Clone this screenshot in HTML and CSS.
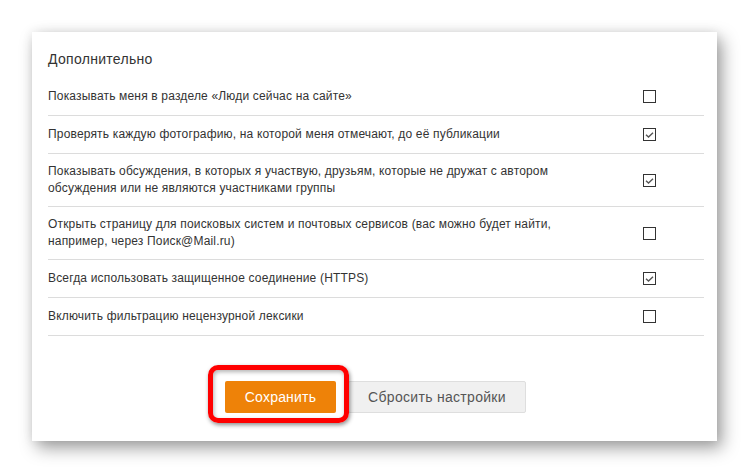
FILE: index.html
```html
<!DOCTYPE html>
<html lang="ru">
<head>
<meta charset="utf-8">
<link rel="stylesheet" href="styles.css">
</head>
<body>
<div class="card">
  <div class="title">Дополнительно</div>
  <ul class="rows">
    <li class="row"><span class="label">Показывать меня в разделе «Люди сейчас на сайте»</span><span class="cb"></span></li>
    <li class="row"><span class="label">Проверять каждую фотографию, на которой меня отмечают, до её публикации</span><span class="cb checked"><svg viewBox="0 0 13 13" width="13" height="13"><path d="M3 6.8 L5.5 9 L10 4.8" fill="none" stroke="#555" stroke-width="1.4"/></svg></span></li>
    <li class="row"><span class="label">Показывать обсуждения, в которых я участвую, друзьям, которые не дружат с автором обсуждения или не являются участниками группы</span><span class="cb checked"><svg viewBox="0 0 13 13" width="13" height="13"><path d="M3 6.8 L5.5 9 L10 4.8" fill="none" stroke="#555" stroke-width="1.4"/></svg></span></li>
    <li class="row"><span class="label">Открыть страницу для поисковых систем и почтовых сервисов (вас можно будет найти, например, через Поиск@Mail.ru)</span><span class="cb"></span></li>
    <li class="row"><span class="label">Всегда использовать защищенное соединение (HTTPS)</span><span class="cb checked"><svg viewBox="0 0 13 13" width="13" height="13"><path d="M3 6.8 L5.5 9 L10 4.8" fill="none" stroke="#555" stroke-width="1.4"/></svg></span></li>
    <li class="row"><span class="label">Включить фильтрацию нецензурной лексики</span><span class="cb"></span></li>
  </ul>
  <div class="actions">
    <div class="save-wrap">
      <button class="btn btn-save">Сохранить</button>
      <span class="highlight"></span>
    </div>
    <button class="btn btn-reset">Сбросить настройки</button>
  </div>
</div>
</body>
</html>
```

FILE: styles.css
```css
html, body {
  margin: 0;
  padding: 0;
  background: #fff;
}
body {
  font-family: "Liberation Sans", Arial, sans-serif;
  color: #333;
  padding: 32px 0 0 32px;
  height: 473px;
  box-sizing: border-box;
  overflow: hidden;
}
.card {
  width: 685px;
  height: 409px;
  box-sizing: border-box;
  background: #fff;
  padding: 19px 13px 0 16px;
  box-shadow: 5px 7px 16px rgba(0,0,0,0.38), 0 0 10px rgba(0,0,0,0.08);
}
.title {
  font-size: 14px;
  line-height: 17px;
  letter-spacing: 0.3px;
  margin-bottom: 10px;
}
.rows {
  list-style: none;
  margin: 0;
  padding: 0;
}
.row {
  display: flex;
  align-items: center;
  justify-content: space-between;
  padding: 9px 0;
  min-height: 19px;
  border-bottom: 1px solid #dcdcdc;
  font-size: 12px;
  line-height: 17px;
  letter-spacing: 0.17px;
}
.label {
  width: 540px;
}
.cb {
  width: 13px;
  height: 13px;
  box-sizing: border-box;
  border: 1px solid #333;
  margin-right: 48px;
  position: relative;
  flex: none;
}
.cb svg {
  position: absolute;
  left: -1px;
  top: -1px;
}
.actions {
  display: flex;
  justify-content: center;
  gap: 12px;
  margin-top: 45px;
  margin-left: -1px;
}
.save-wrap {
  position: relative;
}
.btn {
  font-family: "Liberation Sans", Arial, sans-serif;
  font-size: 14px;
  height: 32px;
  border-radius: 2px;
  cursor: pointer;
}
.btn-save {
  width: 111px;
  background: #ee8208;
  border: none;
  color: #fff;
  letter-spacing: 0.2px;
}
.btn-reset {
  width: 178px;
  background: #f0f0f0;
  border: 1px solid #dedede;
  color: #555;
  letter-spacing: 0.3px;
}
.highlight {
  position: absolute;
  left: -17px;
  top: -16px;
  width: 141px;
  height: 58px;
  box-sizing: border-box;
  border: 5px solid #f00;
  border-radius: 10px;
  box-shadow: 1px 2px 4px rgba(0,0,0,0.45), inset 1px 2px 4px rgba(0,0,0,0.3);
}
```
